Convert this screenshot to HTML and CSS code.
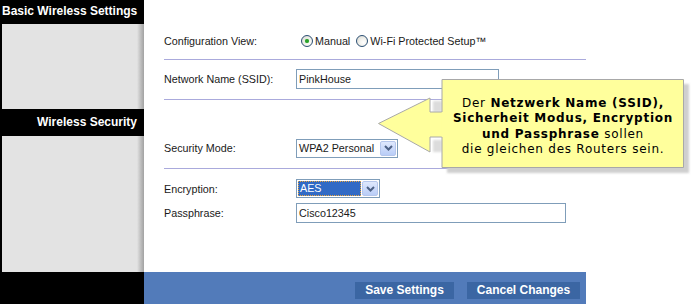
FILE: index.html
```html
<!DOCTYPE html>
<html lang="de">
<head>
  <meta charset="UTF-8">
  <title>Basic Wireless Settings</title>
  <link rel="stylesheet" href="styles.css">
</head>
<body>
  <div class="page">
    <!-- linke Spalte -->
    <div class="side-head head-1">Basic Wireless Settings</div>
    <div class="side side-1"></div>
    <div class="side-head head-2">Wireless Security</div>
    <div class="side side-2"></div>
    <div class="side-foot"></div>

    <!-- Basic Wireless Settings -->
    <div class="section section-1">
      <div class="row">
        <span class="label">Configuration View:</span>
        <span class="radio on"></span><span class="opt">Manual</span>
        <span class="radio"></span><span class="opt">Wi-Fi Protected Setup™</span>
      </div>
      <div class="sep"></div>
      <div class="row row-ssid">
        <span class="label">Network Name (SSID):</span>
        <span class="field field-ssid">PinkHouse</span>
      </div>
      <div class="sep sep-2"></div>
    </div>

    <!-- Wireless Security -->
    <div class="section section-2">
      <div class="row">
        <span class="label">Security Mode:</span>
        <span class="select select-mode">
          <span class="select-value">WPA2 Personal</span>
          <span class="select-btn"><svg width="9" height="6" viewBox="0 0 9 6"><polyline points="1,1 4.5,4.5 8,1" fill="none" stroke="#4d6185" stroke-width="2"/></svg></span>
        </span>
      </div>
      <div class="sep"></div>
      <div class="row row-enc">
        <span class="label">Encryption:</span>
        <span class="select select-enc">
          <span class="select-value on">AES</span>
          <span class="select-btn"><svg width="9" height="6" viewBox="0 0 9 6"><polyline points="1,1 4.5,4.5 8,1" fill="none" stroke="#4d6185" stroke-width="2"/></svg></span>
        </span>
      </div>
      <div class="row row-pass">
        <span class="label">Passphrase:</span>
        <span class="field field-pass">Cisco12345</span>
      </div>
    </div>

    <div class="actions">
      <span class="btn btn-save">Save Settings</span>
      <span class="btn btn-cancel">Cancel Changes</span>
    </div>

    <!-- Hinweis -->
    <div class="tip">
      <svg class="tip-shape" width="320" height="100" viewBox="0 0 320 100">
        <defs>
          <filter id="soft" x="-5%" y="-5%" width="110%" height="110%">
            <feGaussianBlur stdDeviation="1.2"/>
          </filter>
        </defs>
        <g fill="#cfcfcf" filter="url(#soft)">
          <rect x="69" y="5" width="242" height="89"/>
        </g>
        <g fill="#dcdcdc" filter="url(#soft)">
          <rect x="55" y="22" width="9" height="11"/>
          <rect x="55" y="61" width="9" height="12"/>
        </g>
        <polygon points="64,0.5 305.5,0.5 305.5,88.5 64,88.5 64,58 52,58 52,73 0.5,44.5 52,19 52,33 64,33"
                 fill="#ffff9c" stroke="#a8a8a8" stroke-width="1"/>
        <line x1="64" y1="33.5" x2="64" y2="57.5" stroke="#ffff9c" stroke-width="1.2"/>
      </svg>
      <div class="tip-text">
        Der <b>Netzwerk Name (SSID),<br>Sicherheit Modus, Encryption<br>und Passphrase</b> sollen<br>die gleichen des Routers sein.
      </div>
    </div>
  </div>
</body>
</html>
```

FILE: styles.css
```css
body {
  margin: 0;
  background: #fff;
}
.page {
  width: 697px;
  height: 304px;
  position: relative;
  display: grid;
  grid-template-columns: 144px 442px 1fr;
  grid-template-rows: 24px 85px 27px 136px 32px;
  font: 10.75px "Liberation Sans", Arial, sans-serif;
  color: #1a1a1a;
}

/* linke Spalte */
.side-head {
  grid-column: 1;
  background: #000;
  color: #fff;
  font: bold 12px "Liberation Sans", Arial, sans-serif;
  line-height: 23px;
}
.head-1 {
  grid-row: 1;
  padding-left: 2px;
}
.head-2 {
  grid-row: 3;
  text-align: right;
  padding-right: 7px;
  line-height: 27px;
}
.side {
  grid-column: 1;
  border-left: 2px solid #000;
  background: linear-gradient(to right, #e3e3e3 0, #e3e3e3 calc(100% - 7px), #bcbcbc calc(100% - 3px), #a2a2a2 100%);
}
.side-1 {
  grid-row: 2;
}
.side-2 {
  grid-row: 4;
}
.side-foot {
  grid-column: 1;
  grid-row: 5;
  background: #000;
}

/* Formular */
.section {
  grid-column: 2;
  padding-left: 20px;
}
.section-1 {
  grid-row: 2;
  padding-top: 7px;
}
.section-2 {
  grid-row: 4;
  padding-top: 2px;
}
.row {
  height: 20px;
  display: flex;
  align-items: center;
}
.label {
  width: 132px;
  flex: none;
}
.sep {
  height: 1px;
  background: #aaaadc;
  margin: 8px 0 9px;
}
.sep-2 {
  margin: 10px 0 0;
}
.section-2 .sep {
  margin: 10px 0;
}
.row-enc {
  height: 19px;
}
.row-pass {
  margin-top: 5px;
}

.radio {
  width: 12px;
  height: 12px;
  box-sizing: border-box;
  border: 1px solid #2b4f73;
  border-radius: 50%;
  background: radial-gradient(circle at 65% 65%, #fff 0, #f2f2ee 40%, #d4d4cc 100%);
  margin: 0 2px 0 5px;
  position: relative;
  flex: none;
}
.radio.on::after {
  content: "";
  position: absolute;
  left: 3px;
  top: 3px;
  width: 4px;
  height: 4px;
  border-radius: 50%;
  background: #2aa12a;
  box-shadow: 0 0 1px #6bc76b;
}
.opt {
  margin-right: 1px;
}

.field {
  height: 20px;
  box-sizing: border-box;
  border: 1px solid #7f9db9;
  padding: 0 2px;
  line-height: 18px;
  background: #fff;
}
.field-ssid {
  width: 203px;
}
.field-pass {
  width: 270px;
}

.select {
  height: 19px;
  box-sizing: border-box;
  border: 1px solid #7f9db9;
  padding: 1px;
  display: flex;
  background: #fff;
}
.select-mode {
  width: 102px;
}
.select-enc {
  width: 84px;
}
.select-value {
  flex: 1;
  padding-left: 1px;
  line-height: 15px;
  box-sizing: border-box;
}
.select-value.on {
  background: #316ac5;
  color: #fff;
  border: 1px dotted #e8a640;
  line-height: 13px;
  margin-right: 1px;
}
.select-btn {
  width: 16px;
  box-sizing: border-box;
  border: 1px solid #b5c6ec;
  border-radius: 2px;
  background: linear-gradient(#dfe8fd, #b9cdf7);
  display: flex;
  align-items: center;
  justify-content: center;
}

/* Fusszeile */
.actions {
  grid-column: 2;
  grid-row: 5;
  background: #527bba;
  display: flex;
  justify-content: flex-end;
  align-items: flex-start;
  gap: 13px;
  padding: 10px 6px 0 0;
}
.btn {
  height: 17px;
  background: #3b66a3;
  color: #fff;
  font: bold 12px "Liberation Sans", Arial, sans-serif;
  line-height: 17px;
  text-align: center;
}
.btn-save {
  width: 99px;
}
.btn-cancel {
  width: 113px;
}

/* Hinweis */
.tip {
  position: absolute;
  left: 378px;
  top: 79px;
  width: 320px;
  height: 100px;
}
.tip-shape {
  position: absolute;
  left: 0;
  top: 0;
}
.tip-text {
  position: absolute;
  left: 64px;
  top: 0;
  width: 242px;
  padding-top: 17px;
  text-align: center;
  font: 12px "DejaVu Sans", Verdana, sans-serif;
  letter-spacing: 0.75px;
  line-height: 15.4px;
  color: #000;
}
```
